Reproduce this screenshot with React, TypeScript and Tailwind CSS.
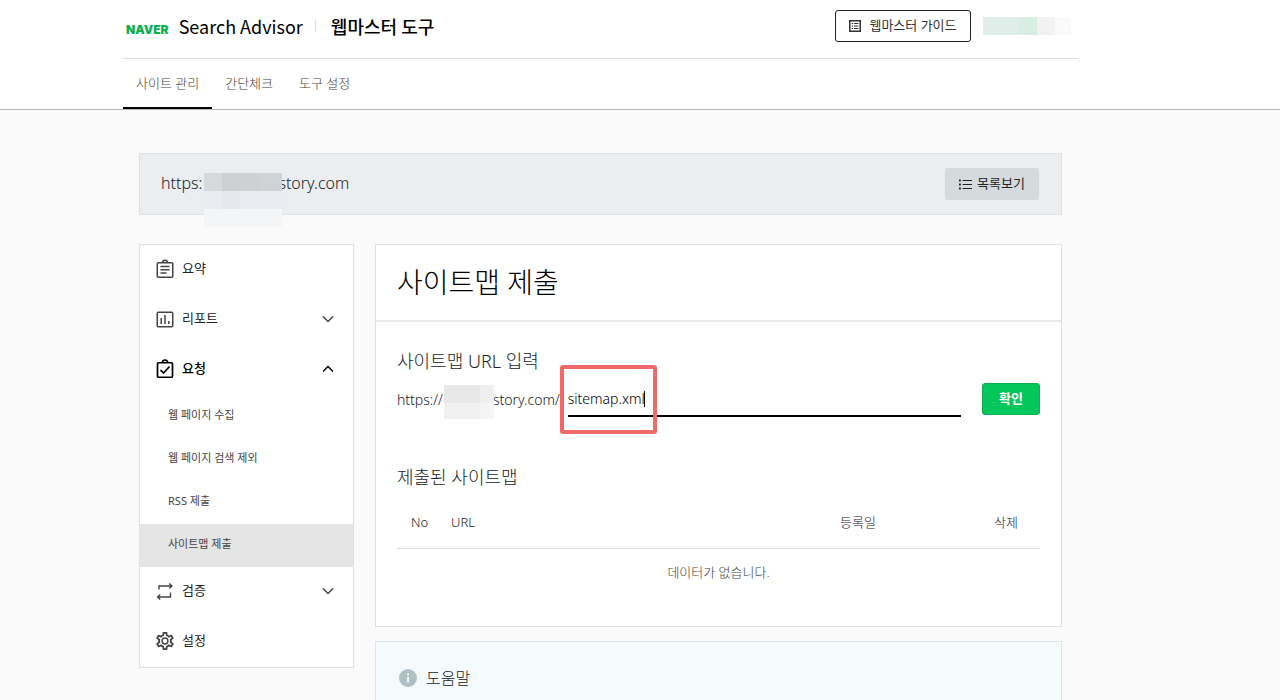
import type { ReactNode } from "react";
import { useState } from "react";

type IconProps = { className?: string };

function ClipboardTextIcon({ className }: IconProps) {
  return (
    <svg className={className} width="18" height="20" viewBox="0 0 18 20" fill="none" stroke="currentColor" strokeWidth="1.5" aria-hidden="true">
      <rect x="1.25" y="3.75" width="15.5" height="14.5" rx="1" />
      <path d="M6.5 3.5a2.5 2.3 0 0 1 5 0" />
      <path d="M4.5 7.5h9M4.5 10.7h9M4.5 14h6" />
    </svg>
  );
}

function ReportIcon({ className }: IconProps) {
  return (
    <svg className={className} width="18" height="20" viewBox="0 0 18 20" fill="none" stroke="currentColor" strokeWidth="1.5" aria-hidden="true">
      <rect x="1.25" y="3.25" width="15.5" height="14.5" rx="1" />
      <path d="M5.2 9v6M9 6v9M12.8 12v3" />
    </svg>
  );
}

function ClipboardCheckIcon({ className }: IconProps) {
  return (
    <svg className={className} width="18" height="20" viewBox="0 0 18 20" fill="none" stroke="currentColor" strokeWidth="1.7" aria-hidden="true">
      <rect x="1.5" y="3.75" width="15" height="14.5" rx="1" />
      <path d="M6.5 3.3a2.5 2.1 0 0 1 5 0" />
      <path d="M4.5 11l3 3 6-6.5" />
    </svg>
  );
}

function RepeatIcon({ className }: IconProps) {
  return (
    <svg className={className} width="18" height="20" viewBox="0 0 18 20" fill="none" stroke="currentColor" strokeWidth="1.4" aria-hidden="true">
      <path d="M3 8.5V5h13M13.3 2.5l2.6 2.5-2.6 2.5" />
      <path d="M14.5 11.5V16H1.5M4.2 13.5L1.6 16l2.6 2.5" />
    </svg>
  );
}

function GearIcon({ className }: IconProps) {
  return (
    <svg className={className} width="18" height="20" viewBox="2.6 1 18.8 22" fill="currentColor" aria-hidden="true">
      <path d="M12 8a4 4 0 0 1 4 4 4 4 0 0 1-4 4 4 4 0 0 1-4-4 4 4 0 0 1 4-4m0 1.6A2.4 2.4 0 0 0 9.6 12a2.4 2.4 0 0 0 2.4 2.4 2.4 2.4 0 0 0 2.4-2.4A2.4 2.4 0 0 0 12 9.6M10 22c-.25 0-.46-.18-.5-.42l-.37-2.65c-.63-.25-1.17-.59-1.69-.99l-2.49 1.01c-.22.08-.49 0-.61-.22l-2-3.46a.493.493 0 0 1 .12-.64l2.11-1.66L4.5 12l.07-1-2.11-1.63a.493.493 0 0 1-.12-.64l2-3.46c.12-.22.39-.31.61-.22l2.49 1c.52-.39 1.06-.73 1.69-.98l.37-2.65c.04-.24.25-.42.5-.42h4c.25 0 .46.18.5.42l.37 2.65c.63.25 1.17.59 1.69.98l2.49-1c.22-.09.49 0 .61.22l2 3.46c.13.22.07.49-.12.64L19.43 11l.07 1-.07 1 2.11 1.63c.19.15.25.42.12.64l-2 3.46c-.12.22-.39.31-.61.22l-2.49-1c-.52.39-1.06.73-1.69.98l-.37 2.65c-.04.24-.25.42-.5.42h-4m1.25-18-.37 2.61c-1.2.25-2.26.89-3.03 1.78L5.44 7.35l-.75 1.3L6.8 10.2a5.55 5.55 0 0 0 0 3.6l-2.12 1.56.75 1.3 2.43-1.04c.77.88 1.82 1.52 3.01 1.76l.37 2.62h1.52l.37-2.61c1.19-.25 2.24-.89 3.01-1.77l2.43 1.04.75-1.3-2.12-1.55c.4-1.17.4-2.44 0-3.61l2.11-1.55-.75-1.3-2.41 1.04a5.42 5.42 0 0 0-3.03-1.77L12.75 4h-1.5Z" />
    </svg>
  );
}

function ChevronIcon({ open }: { open?: boolean }) {
  return (
    <svg width="12" height="8" viewBox="0 0 12 8" fill="none" stroke={open ? "#000" : "#444"} strokeWidth="1.5" aria-hidden="true">
      {open ? <path d="M1 6.5l5-5 5 5" /> : <path d="M1 1.5l5 5 5-5" />}
    </svg>
  );
}

function GuideIcon() {
  return (
    <svg width="12" height="12" viewBox="0 0 12 12" fill="none" stroke="currentColor" strokeWidth="1.5" aria-hidden="true">
      <rect x="0.75" y="0.75" width="10.5" height="10.5" />
      <path d="M5 3.5h4.5M5 6h4.5M5 8.5h4.5M2.7 3.5h1.3M2.7 6h1.3M2.7 8.5h1.3" strokeWidth="1" />
    </svg>
  );
}

function ListIcon() {
  return (
    <svg width="13" height="11" viewBox="0 0 13 11" fill="none" stroke="currentColor" strokeWidth="1.2" aria-hidden="true">
      <path d="M3.6 1.5H13M3.6 5.5H13M3.6 9.5H13" />
      <path d="M0 1.5h1.8M0 5.5h1.8M0 9.5h1.8" strokeWidth="1.8" />
    </svg>
  );
}

function InfoIcon() {
  return (
    <svg width="18" height="18" viewBox="0 0 18 18" aria-hidden="true">
      <circle cx="9" cy="9" r="9" fill="#b0bec5" />
      <path d="M8.1 4.5h1.9v1.9H8.1zM8.1 8h1.9v5.5H8.1z" fill="#f5fafd" />
    </svg>
  );
}

type MenuButtonProps = {
  icon: ReactNode;
  label: string;
  expandable?: boolean;
  open?: boolean;
  onClick?: () => void;
};

function MenuButton({ icon, label, expandable, open, onClick }: MenuButtonProps) {
  return (
    <button
      type="button"
      onClick={onClick}
      aria-expanded={expandable ? !!open : undefined}
      className={
        open
          ? "flex h-[50px] w-full items-center pr-[19px] pb-0.5 pl-4 text-[13px] font-medium text-black"
          : "flex h-[50px] w-full items-center pr-[19px] pb-0.5 pl-4 text-[13px] font-normal text-[#222]"
      }
    >
      <span className={open ? "text-black" : "text-[#444]"}>{icon}</span>
      <span className="ml-2 flex-1 text-left">{label}</span>
      {expandable && <ChevronIcon open={open} />}
    </button>
  );
}

const requestItems = ["웹 페이지 수집", "웹 페이지 검색 제외", "RSS 제출", "사이트맵 제출"];
const tabs = ["사이트 관리", "간단체크", "도구 설정"];

export default function App() {
  const [path, setPath] = useState("sitemap.xml");
  const [requestOpen, setRequestOpen] = useState(true);

  return (
    <div className="h-screen overflow-hidden bg-[#fafafa] font-['Noto_Sans','Noto_Sans_CJK_KR',sans-serif] font-light text-[#222]">
      <header className="border-b border-[#b8b8b8] bg-white pr-[79px]">
        <div className="mx-auto max-w-[955px]">
          <div className="flex h-[59px] items-center border-b border-[#ddd] pr-[7px] pb-1.5">
            <a href="#" className="flex items-baseline">
              <span className="pl-[3px] font-['Inter'] text-[12px] leading-4 font-black text-[#09b24f]">NAVER</span>
              <span className="ml-[10px] font-['Noto_Sans_CJK_KR'] text-[18px] leading-7 font-normal text-black">Search Advisor</span>
            </a>
            <span className="mr-[15px] ml-3 h-3 w-px bg-[#ddd]" />
            <span className="font-['Noto_Sans_CJK_KR'] text-[18px] leading-7 font-medium text-black">웹마스터 도구</span>
            <button type="button" className="ml-auto flex h-8 w-[136px] items-center justify-center gap-2 rounded-[3px] border border-[#222] text-[13px] font-normal text-[#333]">
              <GuideIcon />
              웹마스터 가이드
            </button>
            <div className="ml-3 flex h-[18px] w-[88px]">
              <span className="w-9 bg-[#dfeee8]" />
              <span className="w-[18px] bg-[#d8eee3]" />
              <span className="w-[18px] bg-[#f2f2f2]" />
              <span className="w-4 bg-[#fafafa]" />
            </div>
          </div>
          <nav className="flex h-[50px] text-[13px] text-[#444]">
            {tabs.map((tab, i) => (
              <a
                key={tab}
                href="#"
                className={
                  i === 0
                    ? "flex items-center border-b-2 border-black px-[13px] pt-0.5"
                    : "flex items-center border-b-2 border-transparent px-[13px] pt-0.5"
                }
              >
                {tab}
              </a>
            ))}
          </nav>
        </div>
      </header>

      <div className="pt-[43px] pr-[79px]">
        <div className="mx-auto max-w-[955px] px-4">
          <div className="flex h-[62px] items-center border border-[#dde1e4] bg-[#eaeef1] pr-[22px] pl-[21px]">
            <div className="flex items-center pb-0.5 text-[16px] leading-6">
              <span>https:</span>
              <span className="relative h-6 w-[76px]">
                <span className="absolute top-[2px] left-0.5 w-[78px]">
                  <span className="flex h-[18px]">
                    <span className="w-[18px] bg-[#d6d9dc]" />
                    <span className="w-9 bg-[#cdd1d4]" />
                    <span className="w-6 bg-[#d0d3d6]" />
                  </span>
                  <span className="flex h-[18px]">
                    <span className="w-[18px] bg-[#e9edf1]" />
                    <span className="w-[18px] bg-[#e5e9ed]" />
                    <span className="w-[42px] bg-[#e9ecf0]" />
                  </span>
                  <span className="block h-[18px] bg-[#f3f5f7]" />
                </span>
              </span>
              <span>story.com</span>
            </div>
            <button type="button" className="ml-auto flex h-8 w-[94px] items-center justify-center gap-[5px] rounded-[3px] bg-[#d5dadd] text-[13px] font-normal text-[#222]">
              <ListIcon />
              목록보기
            </button>
          </div>

          <div className="mt-[29px] flex items-start gap-[21px]">
            <aside className="w-[215px] shrink-0 border border-[#e0e0e0] bg-white">
              <MenuButton icon={<ClipboardTextIcon />} label="요약" />
              <MenuButton icon={<ReportIcon />} label="리포트" expandable />
              <MenuButton
                icon={<ClipboardCheckIcon />}
                label="요청"
                expandable
                open={requestOpen}
                onClick={() => setRequestOpen(!requestOpen)}
              />
              {requestOpen && (
                <ul className="text-[11px] font-normal text-[#444]">
                  {requestItems.map((item, i) => (
                    <li key={item}>
                      <a
                        href="#"
                        className={
                          i === 3
                            ? "flex h-[43px] items-center bg-[#e5e5e5] pb-0.5 pl-7"
                            : "flex h-[43px] items-center pb-0.5 pl-7"
                        }
                      >
                        {item}
                      </a>
                    </li>
                  ))}
                </ul>
              )}
              <MenuButton icon={<RepeatIcon />} label="검증" expandable />
              <MenuButton icon={<GearIcon />} label="설정" />
            </aside>

            <main className="min-w-0 flex-1">
              <section className="border border-[#e0e0e0] bg-white">
                <h1 className="border-b-2 border-[#ebebeb] px-[21px] pt-[17px] pb-[18px] text-[28px] leading-10 font-light text-black">
                  사이트맵 제출
                </h1>
                <div className="px-[21px] pt-[27px] pb-[30px]">
                  <label htmlFor="sitemap-path" className="block text-[18px] leading-6">
                    사이트맵 URL 입력
                  </label>
                  <div className="mt-2 flex h-9 items-center text-[14px]">
                    <span>https://</span>
                    <span className="relative h-9 w-[50px]">
                      <span className="absolute top-1 left-px w-[50px]">
                        <span className="flex h-[18px]">
                          <span className="w-9 bg-[#e8e8e8]" />
                          <span className="w-[14px] bg-[#efefef]" />
                        </span>
                        <span className="flex h-4">
                          <span className="w-9 bg-[#f0f0f0]" />
                          <span className="w-[14px] bg-[#f5f5f5]" />
                        </span>
                      </span>
                    </span>
                    <span>story.com/</span>
                    <span className="relative ml-2 h-9 flex-1">
                      <input
                        id="sitemap-path"
                        type="text"
                        value={path}
                        onChange={(e) => setPath(e.target.value)}
                        className="h-9 w-full border-b-2 border-black bg-transparent font-light text-black outline-none"
                      />
                      <span className="absolute top-2.5 left-[76px] h-4 w-px bg-black" />
                      <span className="absolute -top-4 -left-2 h-[69px] w-[97px] rounded-[3px] border-4 border-[#f06a6a]" />
                    </span>
                    <button type="submit" className="ml-[21px] h-8 w-[58px] rounded-[3px] border border-[#08b04e] bg-[#03c75a] text-[13px] font-bold text-white">
                      확인
                    </button>
                  </div>

                  <h2 className="mt-12 text-[18px] leading-6 font-light">제출된 사이트맵</h2>
                  <table className="mt-[9px] w-full table-fixed text-[13px] text-[#222]">
                    <thead>
                      <tr className="h-[50px] border-b border-[#ddd]">
                        <th className="w-10 pl-[14px] text-left font-light">No</th>
                        <th className="pl-[14px] text-left font-light">URL</th>
                        <th className="w-[228px] text-center font-light">등록일</th>
                        <th className="w-[68px] text-center font-light">삭제</th>
                      </tr>
                    </thead>
                    <tbody>
                      <tr className="h-12">
                        <td colSpan={4} className="text-center text-[#444]">
                          데이터가 없습니다.
                        </td>
                      </tr>
                    </tbody>
                  </table>
                </div>
              </section>

              <section className="mt-[14px] border border-[#dfe3e6] bg-[#f5fafd] px-[23px] pt-6 pb-10">
                <h2 className="flex items-center gap-[9px] text-[16px] leading-6 font-light">
                  <InfoIcon />
                  도움말
                </h2>
              </section>
            </main>
          </div>
        </div>
      </div>
    </div>
  );
}
